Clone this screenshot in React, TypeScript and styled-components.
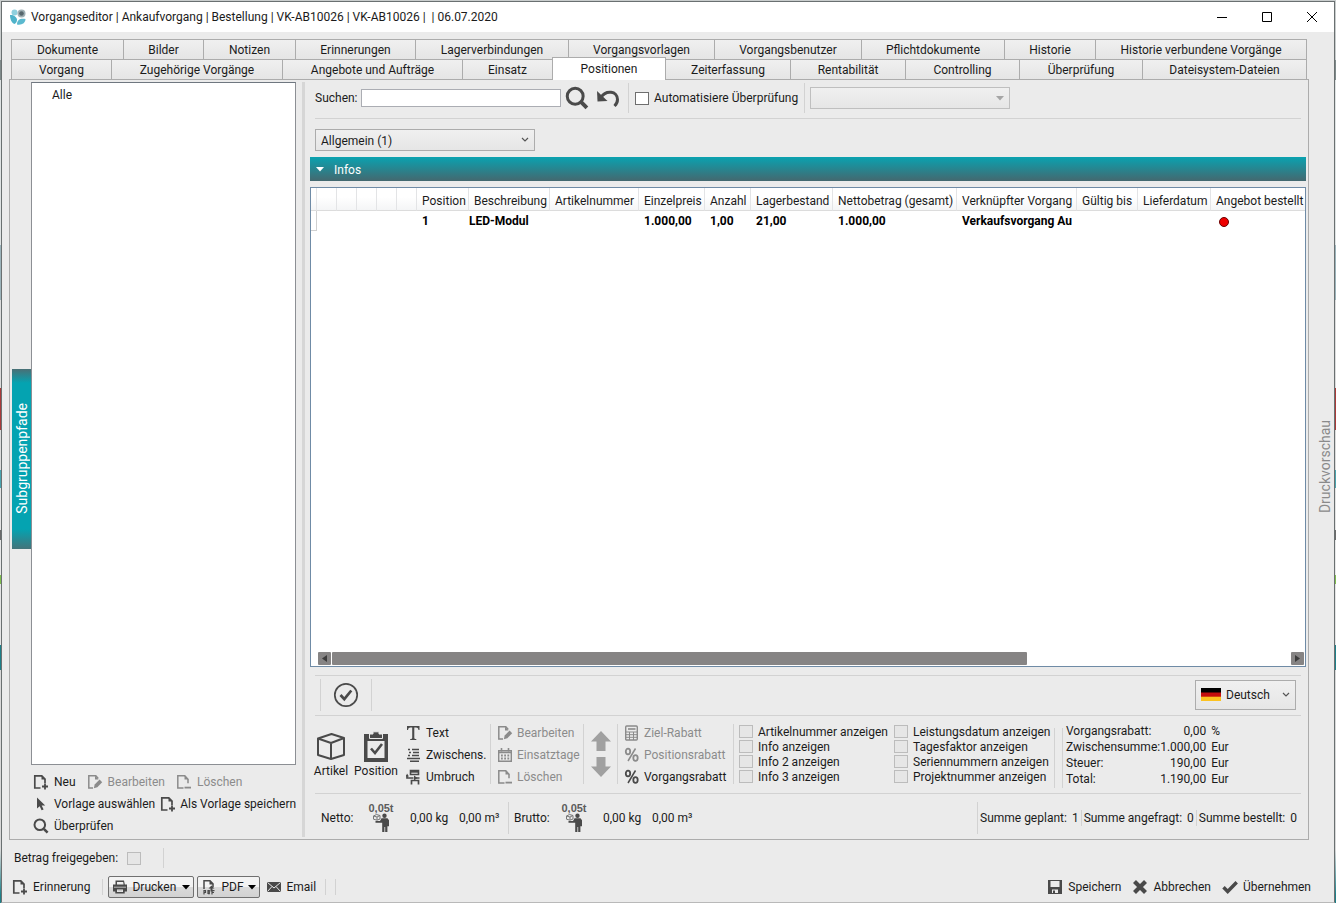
import React from "react";
import styled, { createGlobalStyle, css } from "styled-components";

const ink = "#1b1b1b";
const iconInk = "#4a4a4a";
const faded = "#8b8b8b";
const line = "#d2d2d2";
const edge = "#acacac";
const face = "#ebebeb";

const GlobalStyle = createGlobalStyle`
  * { box-sizing: border-box; }
  body {
    margin: 0;
    background: ${face};
    color: ${ink};
    font: 12px/16px Roboto, "Open Sans", sans-serif;
  }
  button, input, select {
    font: inherit;
    color: inherit;
    margin: 0;
  }
`;

/* ---------- window ---------- */

const Desktop = styled.div`
  display: flex;
  flex-direction: column;
  min-height: 100vh;
  padding: 1px 1px 0;
  background: linear-gradient(
    #c9cdcd 0 60px, #7f8a8a 60px 80px, #dfe3e3 80px 245px, #9cb4bb 245px 300px,
    #dcdcdc 300px 388px, #a93a3a 388px 430px, #dcdcdc 430px 470px, #4aa5b0 470px 488px,
    #e4e4e4 488px 530px, #6b6b6b 530px 540px, #e8e8e8 540px 575px, #7fbf4d 575px 584px,
    #e4e4e4 584px 645px, #1d8089 645px 670px, #d8d8d8 670px 850px, #1d8089 895px
  );
`;

const Window = styled.div`
  flex: 1;
  display: flex;
  flex-direction: column;
  background: ${face};
  border: 1px solid #6a7071;
  border-bottom-color: #b9b9b9;
`;

const TitleBar = styled.header`
  display: flex;
  align-items: center;
  height: 30px;
  padding-left: 8px;
  gap: 5px;
  background: #fff;
`;

const Title = styled.h1`
  flex: 1;
  margin: 0;
  font-size: 12px;
  font-weight: 400;
  white-space: pre;
`;

const CaptionButton = styled.button`
  display: grid;
  place-items: center;
  width: 45px;
  height: 30px;
  padding: 0;
  border: 0;
  background: none;
`;

const CaptionButtons = styled.div`
  display: flex;
`;

const Main = styled.main`
  flex: 1;
  display: flex;
  padding: 7px 0 0 7px;
`;

const Workspace = styled.div`
  flex: 1;
  min-width: 0;
  display: flex;
  flex-direction: column;
`;

/* ---------- tabs ---------- */

const TabRow = styled.div<{ $cols: string }>`
  display: grid;
  grid-template-columns: ${(p) => p.$cols};
  height: 20px;
  margin: 0 2px;
`;

const Tab = styled.button<{ $active?: boolean }>`
  min-width: 0;
  padding: 0;
  white-space: nowrap;
  border: 1px solid ${edge};
  border-bottom: 0;
  border-right-width: 0;
  background: linear-gradient(#f0f0f0, #e5e5e5);
  &:last-child { border-right-width: 1px; }
  ${(p) =>
    p.$active &&
    css`
      margin: -2px -1px -1px 0;
      padding-bottom: 1px;
      border-right-width: 1px;
      background: #fff;
      z-index: 1;
    `}
`;

const Panel = styled.section`
  flex: 1;
  display: flex;
  min-height: 0;
  border: 1px solid ${edge};
`;

/* ---------- left side ---------- */

const Rail = styled.div`
  width: 21px;
  display: flex;
  align-items: center;
  justify-content: flex-end;
  padding-bottom: 2px;
`;

const VerticalText = styled.span`
  writing-mode: vertical-rl;
  transform: rotate(180deg);
  font-size: 14px;
  line-height: 18px;
  white-space: nowrap;
`;

const RailButton = styled.button`
  display: grid;
  place-items: center;
  width: 19px;
  height: 180px;
  padding: 0;
  border: 0;
  color: #fff;
  background: linear-gradient(#4a6f75, #04a3b1 14px, #04a3b1 160px, #44747a);
`;

const GroupColumn = styled.div`
  width: 265px;
  display: flex;
  flex-direction: column;
  padding-top: 2px;
`;

const GroupList = styled.ul`
  flex: 1;
  margin: 0 0 6px;
  padding: 4px 20px;
  list-style: none;
  background: #fff;
  border: 1px solid #8c8f94;
  border-top-color: #6f7780;
`;

const GroupTools = styled.div`
  padding: 0 0 2px 2px;
`;

const ToolLine = styled.div<{ $gap: number }>`
  display: flex;
  align-items: center;
  gap: ${(p) => p.$gap}px;
  height: 22px;
`;

const ToolButton = styled.button<{ $gap?: number }>`
  display: flex;
  align-items: center;
  gap: ${(p) => p.$gap ?? 5}px;
  height: 22px;
  padding: 0;
  border: 0;
  background: none;
  white-space: nowrap;
  color: ${ink};
  svg { flex: none; color: ${iconInk}; }
  &:disabled, &:disabled svg { color: ${faded}; }
`;

const Splitter = styled.div`
  width: 3px;
  margin: 2px 5px 2px 6px;
  background: #d6d6d6;
`;

/* ---------- right side ---------- */

const Content = styled.div`
  flex: 1;
  min-width: 0;
  display: flex;
  flex-direction: column;
  padding-right: 2px;
`;

const Rule = styled.hr`
  width: calc(100% - 10px);
  height: 1px;
  margin: 0 5px;
  border: 0;
  background: ${line};
`;

const Divider = styled.i<{ $h: number }>`
  flex: none;
  width: 1px;
  height: ${(p) => p.$h}px;
  background: ${line};
`;

const SearchRow = styled.div`
  display: flex;
  align-items: center;
  height: 38px;
  padding: 0 5px 2px;
`;

const SearchField = styled.label`
  display: flex;
  align-items: center;
  span { width: 46px; }
  input {
    width: 200px;
    height: 18px;
    padding: 0 3px;
    border: 1px solid #abadb3;
    background: #fff;
  }
`;

const IconButton = styled.button`
  display: grid;
  place-items: center;
  padding: 0;
  border: 0;
  background: none;
  color: ${iconInk};
`;

const SearchActions = styled.div`
  display: flex;
  gap: 7px;
  margin: 0 8px 0 4px;
`;

const Check = styled.label`
  display: flex;
  align-items: center;
  gap: 5px;
  white-space: nowrap;
`;

const Tick = styled.input.attrs({ type: "checkbox" })`
  appearance: none;
  flex: none;
  width: 14px;
  height: 13px;
  border: 1px solid #6e6e6e;
  background: #fff;
  &:disabled {
    border-color: #bcbcbc;
    background: #e6e6e6;
  }
`;

const AutoCheck = styled.div`
  width: 175px;
  padding-left: 6px;
`;

const SelectBox = styled.div<{ $w: number; $h: number; $muted?: boolean }>`
  display: flex;
  align-items: center;
  gap: 5px;
  width: ${(p) => p.$w}px;
  height: ${(p) => p.$h}px;
  padding: 0 5px;
  border: 1px solid ${(p) => (p.$muted ? "#bfbfbf" : edge)};
  background: linear-gradient(#f0f0f0, #e6e6e6);
  svg { flex: none; }
  select {
    appearance: none;
    flex: 1;
    min-width: 0;
    height: 100%;
    padding: 1px 0 0;
    border: 0;
    background: none;
  }
`;

const AutoSelect = styled.div`
  margin-left: 5px;
`;

const GroupSelect = styled.div`
  padding: 10px 5px 6px;
`;

const InfoBar = styled.button`
  display: flex;
  align-items: center;
  gap: 10px;
  height: 24px;
  padding: 1px 6px 0;
  border: 0;
  color: #fff;
  background: linear-gradient(#0aa2b0, #44686f);
`;

const GridFrame = styled.div`
  flex: 1;
  display: flex;
  flex-direction: column;
  margin: 6px 0 8px;
  border: 1px solid #6f8ba6;
  background: #fff;
  overflow: hidden;
`;

const DataTable = styled.table`
  width: 100%;
  table-layout: fixed;
  border-collapse: separate;
  border-spacing: 0;
  th, td {
    padding: 0 0 0 5px;
    text-align: left;
    white-space: nowrap;
    overflow: hidden;
  }
  th {
    height: 23px;
    padding-top: 3px;
    font-weight: 400;
    border-right: 1px solid #e3e4e6;
    border-bottom: 1px solid #dcdcdc;
    background: linear-gradient(#fff 0 9px, #f4f5f6);
  }
  th:last-child { border-right: 0; }
  td {
    height: 20px;
    font-weight: 700;
    color: #000;
  }
  td:first-child { border-right: 1px solid #d0d0d0; border-bottom: 1px solid #d0d0d0; }
  td.flush { padding-left: 0; }
`;

const StatusDot = styled.i`
  display: block;
  width: 10px;
  height: 10px;
  margin: 2px 0 0 3px;
  border: 1px solid #6b0000;
  border-radius: 50%;
  background: #ee0000;
`;

const ScrollBar = styled.div`
  display: flex;
  gap: 1px;
  height: 13px;
  margin: auto 1px 1px 7px;
`;

const ScrollArrow = styled.button`
  display: grid;
  place-items: center;
  width: 13px;
  padding: 0;
  border: 0;
  border-radius: 1px;
  background: #868484;
`;

const ScrollTrack = styled.div`
  flex: 1;
  display: grid;
  grid-template-columns: 29fr 11fr;
  i {
    border-radius: 1px;
    background: #868484;
  }
`;

const ApproveRow = styled.div`
  display: flex;
  align-items: center;
  height: 39px;
  padding: 0 10px 2px;
`;

const ApproveSlot = styled.div`
  display: flex;
  align-items: center;
  gap: 12px;
  flex: 1;
`;

const Ribbon = styled.div`
  display: flex;
  height: 77px;
  padding: 6px 4px 0;
  white-space: nowrap;
`;

const BigButton = styled.button<{ $w: number }>`
  display: flex;
  flex-direction: column;
  align-items: center;
  justify-content: flex-end;
  gap: 1px;
  width: ${(p) => p.$w}px;
  height: 57px;
  padding: 0;
  border: 0;
  background: none;
  color: ${ink};
  svg { color: ${iconInk}; }
`;

const RibbonGroup = styled.div<{ $w: number; $pad: number }>`
  width: ${(p) => p.$w}px;
  height: 66px;
  padding-left: ${(p) => p.$pad}px;
`;

const RibbonDivider = styled(Divider)`
  margin-top: 2px;
`;

const ArrowStack = styled.div`
  display: flex;
  flex-direction: column;
  align-items: center;
  gap: 6px;
  width: 33px;
  padding-top: 9px;
  svg { color: #a0a0a0; display: block; }
`;

const CheckColumn = styled.div<{ $w: number }>`
  width: ${(p) => p.$w}px;
  padding: 2px 0 0 5px;
  label { height: 15px; }
`;

const Totals = styled.table`
  width: 160px;
  margin: 1px 0 0 3px;
  border-spacing: 0;
  align-self: flex-start;
  th, td { height: 16px; padding: 0; font-weight: 400; text-align: left; }
  td:nth-child(2) { text-align: right; }
  td:last-child { padding-left: 5px; }
`;

const WeightRow = styled.div`
  display: flex;
  align-items: center;
  height: 45px;
  padding: 2px 9px 0 6px;
  white-space: nowrap;
`;

const WeightGroup = styled.div`
  display: flex;
  align-items: center;
  padding-left: 5px;
`;

const WeightName = styled.span`
  width: 43px;
`;

const WeightIcon = styled.div`
  width: 34px;
  margin-right: 12px;
  text-align: center;
  font: 700 11px/10px "Liberation Sans", sans-serif;
  color: #5c5c5c;
  svg { display: block; margin: 0 auto; }
`;

const Amount = styled.span`
  width: 49px;
`;

const Sums = styled.div`
  display: flex;
  align-items: center;
  gap: 2px;
  margin-left: auto;
`;

const SumItem = styled.span`
  display: flex;
  gap: 5px;
`;

const PreviewRail = styled.aside`
  width: 25px;
  display: flex;
  align-items: center;
  justify-content: flex-end;
  padding-top: 54px;
  color: #8a8a8a;
`;

/* ---------- footer ---------- */

const Footer = styled.footer`
  padding: 8px 23px 4px 10px;
`;

const ReleaseRow = styled.div`
  display: flex;
  align-items: center;
  gap: 22px;
  height: 20px;
  padding-left: 2px;
`;

const ReleaseCheck = styled(Check)`
  gap: 9px;
`;

const ActionRow = styled.div`
  display: flex;
  align-items: center;
  height: 22px;
  margin-top: 8px;
`;

const ActionGroup = styled.div<{ $gap: number; $left?: number }>`
  display: flex;
  align-items: center;
  gap: ${(p) => p.$gap}px;
  margin-left: ${(p) => p.$left ?? 0}px;
`;

const RightActions = styled(ActionGroup)`
  margin-left: auto;
`;

const SplitButton = styled(ToolButton)<{ $w: number }>`
  width: ${(p) => p.$w}px;
  padding: 0 3px;
  border: 1px solid #707070;
  border-radius: 2px;
  background: linear-gradient(#f3f3f3 50%, #dadada 50%, #d2d2d2);
  svg:last-child { margin-left: auto; color: #000; }
`;

/* ---------- icons ---------- */

const Svg = ({ w = 16, h = 16, vb, children }: { w?: number; h?: number; vb?: string; children: React.ReactNode }) => (
  <svg width={w} height={h} viewBox={vb ?? `0 0 ${w} ${h}`} fill="none" stroke="none" aria-hidden="true">
    {children}
  </svg>
);

const docPath = "M7.5 14H1.8V1.8h7l3.2 3.4v4";

const DocPlus = () => (
  <Svg>
    <path d={docPath} stroke="currentColor" strokeWidth="1.7" />
    <path d="M8.5 1.5v4h4z" fill="currentColor" />
    <path d="M12 9.5v6M9 12.5h6" stroke="currentColor" strokeWidth="1.8" />
  </Svg>
);
const DocPen = () => (
  <Svg>
    <path d="M6 14H1.8V1.8h7l2.5 2.6" stroke="currentColor" strokeWidth="1.5" />
    <path d="M8 1.5v4h3.5z" fill="currentColor" />
    <path d="M12.6 5.6l2.6 2.6-4.9 5-3.5 1 .9-3.7z" fill="currentColor" />
  </Svg>
);
const DocMinus = () => (
  <Svg>
    <path d={docPath} stroke="currentColor" strokeWidth="1.5" />
    <path d="M8.5 1.5v4h4z" fill="currentColor" />
    <path d="M8.5 13.6h6.5" stroke="currentColor" strokeWidth="1.8" />
  </Svg>
);
const DocPdf = () => (
  <Svg>
    <path d="M3 10V1.7h6l3 3.2v3" stroke="currentColor" strokeWidth="1.5" />
    <path d="M8.5 1.5v4h4z" fill="currentColor" />
    <path d="M10.5 6.5l3 3h-2v3h-2v-3h-2z" fill="currentColor" />
    <path d="M3 15.5v-4h1.500v2H3M7 15v-3.300h1.300v3H7M11 15.500v-3.800h2.500M11 13.500h2" stroke="currentColor" strokeWidth="1.200" />
  </Svg>
);
const Cursor = () => (
  <Svg>
    <path d="M4 1.500v11l2.700-2.300 1.900 4.100 2-.9-1.900-4h3.500z" fill="currentColor" />
  </Svg>
);
const Magnifier = ({ size = 16 }: { size?: number }) => (
  <Svg w={size} h={size} vb="0 0 16 16">
    <circle cx="6.800" cy="6.800" r="5.300" stroke="currentColor" strokeWidth="2" />
    <path d="M10.800 10.800l3.800 3.800" stroke="currentColor" strokeWidth="2.600" />
  </Svg>
);
const Undo = () => (
  <Svg w={24} h={24}>
    <path d="M5 11.500C10 3.500 21.500 5 21.500 13.500c0 2.800-1.200 4.800-3 6.500" stroke="currentColor" strokeWidth="3" />
    <path d="M1 5l.5 10.500L11.500 15z" fill="currentColor" />
  </Svg>
);
const Chevron = () => (
  <Svg w={8} h={6}>
    <path d="M1 1l3 3 3-3" stroke="#555" strokeWidth="1.200" />
  </Svg>
);
const Caret = ({ color = "currentColor", w = 8 }: { color?: string; w?: number }) => (
  <Svg w={w} h={5} vb="0 0 8 5">
    <path d="M0 0h8L4 4.500z" fill={color} />
  </Svg>
);
const CircleCheck = () => (
  <Svg w={26} h={26}>
    <circle cx="13" cy="13" r="11.200" stroke="currentColor" strokeWidth="1.700" />
    <path d="M7.500 13l3.800 4.200 7-8.700" stroke="currentColor" strokeWidth="2.700" />
  </Svg>
);
const Box = () => (
  <Svg w={30} h={30}>
    <path d="M2 6.500L15.500 2 28 6v17l-13 4L2 23zM2 6.500L15 11l13-5M15 11v16" stroke="currentColor" strokeWidth="2" strokeLinejoin="round" />
  </Svg>
);
const Clipboard = () => (
  <Svg w={26} h={31}>
    <path d="M1 3h24v28H1zM4.500 10v17h17V10z" fillRule="evenodd" fill="currentColor" />
    <path d="M6.500 7.500V3H10V.8h6V3h3.500v4.500z" fill="currentColor" stroke={face} strokeWidth="1" />
    <path d="M8 17.500l4 4.500 7-9" stroke="currentColor" strokeWidth="2.600" />
  </Svg>
);
const TextT = () => (
  <Svg>
    <path d="M1 1h12.500v4h-1c-.4-2-1-2.600-2.500-2.600H8.300v10.400c0 1 .5 1.200 2 1.300v.9H4.200v-.9c1.500-.1 2-.3 2-1.300V2.400H4.500C3 2.400 2.400 3 2 5H1z" fill="currentColor" />
  </Svg>
);
const ListLines = () => (
  <Svg>
    <path d="M2 2.500h2M6 2.500h7M3 5.500h2M7 5.500h6M2 8.500h2M6 8.500h7M1 11.500h13M4 14.200h9" stroke="currentColor" strokeWidth="1.400" />
  </Svg>
);
const PageBreak = () => (
  <Svg>
    <path d="M4.500 1.500h8v4h-8z" stroke="currentColor" strokeWidth="1.600" />
    <path d="M4 2.500h9" stroke="currentColor" strokeWidth="2.400" />
    <path d="M1 6v3h6.500M5.500 15.500v-4h7v4M8 9h5.500" stroke="currentColor" strokeWidth="1.700" />
    <path d="M1 4.500l2 3H0zM8 6.500L11.500 9 8 11.500z" fill="currentColor" />
  </Svg>
);
const CalendarIcon = () => (
  <Svg>
    <path d="M1.700 3.700h12.600v10.600H1.700z" stroke="currentColor" strokeWidth="1.400" />
    <path d="M4.500 1v3.500M11.500 1v3.500" stroke="currentColor" strokeWidth="1.600" />
    <path d="M2 5.500h12" stroke="currentColor" strokeWidth="1.500" />
    <path d="M4 8.500h8.500M4 11.500h8.500" stroke="currentColor" strokeWidth="1.800" strokeDasharray="1.800 1.400" />
  </Svg>
);
const Calculator = () => (
  <Svg>
    <rect x="1.700" y="1" width="11.600" height="14" rx="1" stroke="currentColor" strokeWidth="1.400" />
    <path d="M4 4h7.500" stroke="currentColor" strokeWidth="1.600" />
    <path d="M2 7h11M2 9.700h11M2 12.300h11M5.500 7v8M9.500 7v8" stroke="currentColor" strokeWidth="1" />
  </Svg>
);
const Percent = () => (
  <Svg>
    <ellipse cx="4" cy="4.500" rx="2.200" ry="2.800" stroke="currentColor" strokeWidth="1.800" />
    <ellipse cx="11.500" cy="11" rx="2.200" ry="2.800" stroke="currentColor" strokeWidth="1.800" />
    <path d="M11.500 1.500L4 14" stroke="currentColor" strokeWidth="1.500" />
  </Svg>
);
const ArrowUp = () => (
  <Svg w={20} h={20}>
    <path d="M10 0l10 10.500h-5.500V20h-9v-9.500H0z" fill="currentColor" />
  </Svg>
);
const ArrowDown = () => (
  <Svg w={20} h={20}>
    <path d="M10 20l10-10.500h-5.500V0h-9v9.500H0z" fill="currentColor" />
  </Svg>
);
const Carrier = () => (
  <Svg w={18} h={19}>
    <path d="M1.500 3l3-1.500L8 2.500V6L5 7.200 1.500 6.200zM1.500 3L5 4l3-1.500M5 4v3" stroke="#777" strokeWidth="1" />
    <circle cx="12.500" cy="2.700" r="2.200" fill="#4a4a4a" />
    <path d="M9.500 5.200h6l1.500 2v6h-1.600V19h-2.200v-5h-.8v5h-2.200V9.700H3.500V8H8z" fill="#4a4a4a" />
  </Svg>
);
const Flag = () => (
  <Svg w={20} h={13}>
    <path d="M0 0h20v5H0z" fill="#000" />
    <path d="M0 4.500h20V9H0z" fill="#c40d0d" />
    <path d="M0 8.700h20V13H0z" fill="#fcc220" />
  </Svg>
);
const Printer = () => (
  <Svg>
    <path d="M3.500 1.500h8.500l.8 4H15v7h-2.300v2H3.300v-2H1v-7h2.500z" fill="currentColor" />
    <path d="M5 3h6.200l.4 2.500H5zM5 10.500h6V13H5z" fill="#efefef" />
    <path d="M5.500 11.800h5M2 8.200h12" stroke="#bbb" strokeWidth="1" />
  </Svg>
);
const Mail = () => (
  <Svg>
    <path d="M1 3h14v10H1z" fill="currentColor" />
    <path d="M1.500 3.500L8 9l6.500-5.500M1.500 12.500l4.500-5M14.500 12.500l-4.500-5" stroke={face} strokeWidth="1" />
  </Svg>
);
const Disk = () => (
  <Svg>
    <path d="M1 1h14v14H1zM3.500 2v6h9V2zM5 10.500V14h6v-3.500z" fillRule="evenodd" fill="currentColor" />
    <path d="M6 11.500h2V14H6z" fill="currentColor" />
  </Svg>
);
const Cross = () => (
  <Svg>
    <path d="M2.500 2.500l11 11M13.500 2.500l-11 11" stroke="currentColor" strokeWidth="4.200" />
  </Svg>
);
const CheckMark = () => (
  <Svg>
    <path d="M1.500 8.200l4.200 4.300 9-9.300" stroke="currentColor" strokeWidth="3.400" />
  </Svg>
);
const Logo = () => (
  <Svg w={16} h={16}>
    <circle cx="4.500" cy="3.500" r="3" fill="#8fd0de" />
    <path d="M0 6c3-.5 6.500 1.500 7 4.500.2 2-1 4-2.500 4.500C1.500 14 0 10 0 6z" fill="#4fb3ca" />
    <path d="M7 15.500c0-4.500 3-6.500 8.500-5.500 0 4-4 6.500-8.500 5.500z" fill="#5bb9cf" />
    <circle cx="11.500" cy="4.500" r="4" fill="#9fb0b5" />
    <circle cx="11.500" cy="4.500" r="2.300" fill="#56666c" />
  </Svg>
);

/* ---------- data ---------- */

const upperTabs = ["Dokumente", "Bilder", "Notizen", "Erinnerungen", "Lagerverbindungen", "Vorgangsvorlagen", "Vorgangsbenutzer", "Pflichtdokumente", "Historie", "Historie verbundene Vorgänge"];
const lowerTabs = ["Vorgang", "Zugehörige Vorgänge", "Angebote und Aufträge", "Einsatz", "Positionen", "Zeiterfassung", "Rentabilität", "Controlling", "Überprüfung", "Dateisystem-Dateien"];

const columns: { name: string; width?: number; value?: React.ReactNode; flush?: boolean }[] = [
  { name: "", width: 6 },
  { name: "", width: 20 },
  { name: "", width: 20 },
  { name: "", width: 20 },
  { name: "", width: 20 },
  { name: "", width: 20 },
  { name: "Position", width: 52, value: "1" },
  { name: "Beschreibung", width: 81, value: "LED-Modul", flush: true },
  { name: "Artikelnummer", width: 89 },
  { name: "Einzelpreis", width: 66, value: "1.000,00" },
  { name: "Anzahl", width: 46, value: "1,00" },
  { name: "Lagerbestand", width: 82, value: "21,00" },
  { name: "Nettobetrag (gesamt)", width: 124, value: "1.000,00" },
  { name: "Verknüpfter Vorgang", width: 120, value: "Verkaufsvorgang Au" },
  { name: "Gültig bis", width: 61 },
  { name: "Lieferdatum", width: 73 },
  { name: "Angebot bestellt", value: <StatusDot /> },
];

const totals = [
  ["Vorgangsrabatt:", "0,00", "%"],
  ["Zwischensumme:", "1.000,00", "Eur"],
  ["Steuer:", "190,00", "Eur"],
  ["Total:", "1.190,00", "Eur"],
];

const Weight = ({ name }: { name: string }) => (
  <WeightGroup>
    <WeightName>{name}</WeightName>
    <WeightIcon>
      0,05t
      <Carrier />
    </WeightIcon>
    <Amount>0,00 kg</Amount>
    <Amount>0,00 m³</Amount>
  </WeightGroup>
);

const Options = ({ names, width }: { names: string[]; width: number }) => (
  <CheckColumn $w={width}>
    {names.map((n) => (
      <Check key={n}>
        <Tick disabled />
        {n}
      </Check>
    ))}
  </CheckColumn>
);

export default function App() {
  return (
    <Desktop>
      <GlobalStyle />
      <Window>
        <TitleBar>
          <Logo />
          <Title>{"Vorgangseditor | Ankaufvorgang | Bestellung | VK-AB10026 | VK-AB10026 |  | 06.07.2020"}</Title>
          <CaptionButtons>
            <CaptionButton aria-label="Minimieren">
              <Svg w={10} h={10}><path d="M0 5.500h10" stroke="#000" /></Svg>
            </CaptionButton>
            <CaptionButton aria-label="Maximieren">
              <Svg w={10} h={10}><path d="M.5.500h9v9h-9z" stroke="#000" /></Svg>
            </CaptionButton>
            <CaptionButton aria-label="Schließen">
              <Svg w={10} h={10}><path d="M0 0l10 10M10 0L0 10" stroke="#000" /></Svg>
            </CaptionButton>
          </CaptionButtons>
        </TitleBar>

        <Main>
          <Workspace>
            <TabRow $cols="112fr 80fr 92fr 120fr 153fr 146fr 147fr 143fr 91fr 212fr">
              {upperTabs.map((t) => <Tab key={t}>{t}</Tab>)}
            </TabRow>
            <TabRow $cols="100fr 171fr 180fr 90fr 113fr 125fr 115fr 114fr 123fr 165fr">
              {lowerTabs.map((t) => <Tab key={t} $active={t === "Positionen"}>{t}</Tab>)}
            </TabRow>

            <Panel>
              <Rail>
                <RailButton><VerticalText>Subgruppenpfade</VerticalText></RailButton>
              </Rail>
              <GroupColumn>
                <GroupList><li>Alle</li></GroupList>
                <GroupTools>
                  <ToolLine $gap={11}>
                    <ToolButton><DocPlus />Neu</ToolButton>
                    <ToolButton disabled><DocPen />Bearbeiten</ToolButton>
                    <ToolButton disabled><DocMinus />Löschen</ToolButton>
                  </ToolLine>
                  <ToolLine $gap={5}>
                    <ToolButton><Cursor />Vorlage auswählen</ToolButton>
                    <ToolButton $gap={4}><DocPlus />Als Vorlage speichern</ToolButton>
                  </ToolLine>
                  <ToolLine $gap={5}>
                    <ToolButton><Magnifier />Überprüfen</ToolButton>
                  </ToolLine>
                </GroupTools>
              </GroupColumn>
              <Splitter />

              <Content>
                <SearchRow>
                  <SearchField><span>Suchen:</span><input type="text" /></SearchField>
                  <SearchActions>
                    <IconButton aria-label="Suchen"><Magnifier size={24} /></IconButton>
                    <IconButton aria-label="Zurücksetzen"><Undo /></IconButton>
                  </SearchActions>
                  <Divider $h={30} />
                  <AutoCheck>
                    <Check><Tick />Automatisiere Überprüfung</Check>
                  </AutoCheck>
                  <Divider $h={30} />
                  <AutoSelect>
                    <SelectBox $w={200} $h={22} $muted>
                      <select disabled aria-label="Überprüfung" />
                      <Caret color="#a5a5a5" />
                    </SelectBox>
                  </AutoSelect>
                </SearchRow>
                <Rule />
                <GroupSelect>
                  <SelectBox $w={220} $h={22}>
                    <select aria-label="Gruppe"><option>Allgemein (1)</option></select>
                    <Chevron />
                  </SelectBox>
                </GroupSelect>
                <InfoBar><Caret />Infos</InfoBar>

                <GridFrame>
                  <DataTable>
                    <colgroup>
                      {columns.map((c, i) => <col key={i} width={c.width} />)}
                    </colgroup>
                    <thead>
                      <tr>{columns.map((c, i) => <th key={i}>{c.name}</th>)}</tr>
                    </thead>
                    <tbody>
                      <tr>{columns.map((c, i) => <td key={i} className={c.flush ? "flush" : undefined}>{c.value}</td>)}</tr>
                    </tbody>
                  </DataTable>
                  <ScrollBar>
                    <ScrollArrow aria-label="Nach links"><Svg w={5} h={7}><path d="M5 0v7L0 3.500z" fill="#3c3c3c" /></Svg></ScrollArrow>
                    <ScrollTrack><i /></ScrollTrack>
                    <ScrollArrow aria-label="Nach rechts"><Svg w={5} h={7}><path d="M0 0v7l5-3.500z" fill="#3c3c3c" /></Svg></ScrollArrow>
                  </ScrollBar>
                </GridFrame>

                <Rule />
                <ApproveRow>
                  <ApproveSlot>
                    <Divider $h={32} />
                    <IconButton aria-label="Freigeben"><CircleCheck /></IconButton>
                    <Divider $h={32} />
                  </ApproveSlot>
                  <SelectBox $w={101} $h={30}>
                    <Flag />
                    <select aria-label="Sprache"><option>Deutsch</option></select>
                    <Chevron />
                  </SelectBox>
                </ApproveRow>
                <Rule />

                <Ribbon>
                  <BigButton $w={34}><Box />Artikel</BigButton>
                  <BigButton $w={56}><Clipboard />Position</BigButton>
                  <RibbonGroup $w={86} $pad={2}>
                    <ToolButton $gap={4}><TextT />Text</ToolButton>
                    <ToolButton $gap={4}><ListLines />Zwischens.</ToolButton>
                    <ToolButton $gap={4}><PageBreak />Umbruch</ToolButton>
                  </RibbonGroup>
                  <RibbonDivider $h={60} />
                  <RibbonGroup $w={92} $pad={6}>
                    <ToolButton disabled $gap={4}><DocPen />Bearbeiten</ToolButton>
                    <ToolButton disabled $gap={4}><CalendarIcon />Einsatztage</ToolButton>
                    <ToolButton disabled $gap={4}><DocMinus />Löschen</ToolButton>
                  </RibbonGroup>
                  <RibbonDivider $h={60} />
                  <ArrowStack>
                    <IconButton aria-label="Nach oben"><ArrowUp /></IconButton>
                    <IconButton aria-label="Nach unten"><ArrowDown /></IconButton>
                  </ArrowStack>
                  <RibbonDivider $h={60} />
                  <RibbonGroup $w={115} $pad={6}>
                    <ToolButton disabled $gap={4}><Calculator />Ziel-Rabatt</ToolButton>
                    <ToolButton disabled $gap={4}><Percent />Positionsrabatt</ToolButton>
                    <ToolButton $gap={4}><Percent />Vorgangsrabatt</ToolButton>
                  </RibbonGroup>
                  <RibbonDivider $h={60} />
                  <Options width={155} names={["Artikelnummer anzeigen", "Info anzeigen", "Info 2 anzeigen", "Info 3 anzeigen"]} />
                  <Options width={165} names={["Leistungsdatum anzeigen", "Tagesfaktor anzeigen", "Seriennummern anzeigen", "Projektnummer anzeigen"]} />
                  <ActionGroup $gap={7}>
                    <Divider $h={60} />
                    <Divider $h={60} />
                  </ActionGroup>
                  <Totals>
                    <tbody>
                      {totals.map(([k, v, u]) => (
                        <tr key={k}><th scope="row">{k}</th><td>{v}</td><td>{u}</td></tr>
                      ))}
                    </tbody>
                  </Totals>
                </Ribbon>
                <Rule />

                <WeightRow>
                  <Weight name="Netto:" />
                  <Divider $h={32} />
                  <Weight name="Brutto:" />
                  <Sums>
                    <Divider $h={32} />
                    <SumItem><span>Summe geplant:</span><span>1</span></SumItem>
                    <Divider $h={16} />
                    <SumItem><span>Summe angefragt:</span><span>0</span></SumItem>
                    <Divider $h={16} />
                    <SumItem><span>Summe bestellt:</span><span>0</span></SumItem>
                  </Sums>
                </WeightRow>
              </Content>
            </Panel>
          </Workspace>
          <PreviewRail><VerticalText>Druckvorschau</VerticalText></PreviewRail>
        </Main>

        <Footer>
          <ReleaseRow>
            <ReleaseCheck>Betrag freigegeben:<Tick disabled /></ReleaseCheck>
            <Divider $h={20} />
          </ReleaseRow>
          <ActionRow>
            <ToolButton><DocPlus />Erinnerung</ToolButton>
            <ActionGroup $gap={5} $left={12}>
              <Divider $h={16} />
              <SplitButton $w={86} $gap={4}><Printer />Drucken<Caret /></SplitButton>
            </ActionGroup>
            <ActionGroup $gap={6} $left={3}>
              <SplitButton $w={63} $gap={4}><DocPdf />PDF<Caret /></SplitButton>
              <ToolButton $gap={4}><Mail />Email</ToolButton>
            </ActionGroup>
            <ActionGroup $gap={9} $left={9}>
              <Divider $h={16} />
              <Divider $h={16} />
            </ActionGroup>
            <RightActions $gap={11}>
              <ToolButton><Disk />Speichern</ToolButton>
              <ToolButton><Cross />Abbrechen</ToolButton>
              <ToolButton><CheckMark />Übernehmen</ToolButton>
            </RightActions>
          </ActionRow>
        </Footer>
      </Window>
    </Desktop>
  );
}
